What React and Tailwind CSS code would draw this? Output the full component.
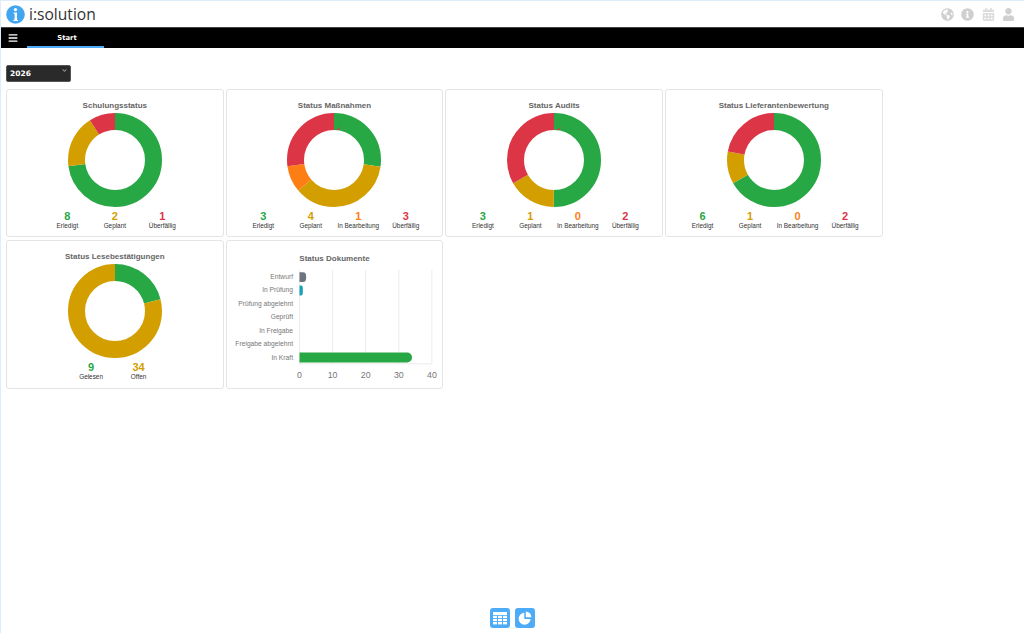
import React from "react";
import { FaGlobeAmericas, FaInfoCircle, FaCalendarAlt, FaUser, FaBars, FaChevronDown } from "react-icons/fa";

const G = "#28a745", A = "#d39e00", O = "#fd7e14", R = "#dc3545";

function Donut({ data }) {
  const total = data.reduce((s, d) => s + d, 0);
  const colors = data.length === 2 ? [G, A] : data.length === 3 ? [G, A, R] : [G, A, O, R];
  const r = 38.5;
  const c = 2 * Math.PI * r;
  let acc = 0;
  return (
    <svg width="96" height="96" viewBox="0 0 96 96" className="block">
      <g transform="rotate(-90 48 48)">
        {data.map((v, i) => {
          const len = (v / total) * c;
          const el = (
            <circle key={i} cx="48" cy="48" r={r} fill="none" stroke={colors[i]} strokeWidth="17"
              strokeDasharray={`${len} ${c - len}`} strokeDashoffset={-acc} />
          );
          acc += len;
          return el;
        })}
      </g>
    </svg>
  );
}

function Stat({ value, label, color }) {
  return (
    <div className="w-[47.5px] flex flex-col items-center">
      <div className="text-[11px] leading-[11px] font-bold" style={{ color }}>{value}</div>
      <div className="text-[6.4px] leading-[8px] text-[#333] whitespace-nowrap">{label}</div>
    </div>
  );
}

function Card({ title, data, stats }) {
  const colors = stats.length === 2 ? [G, A] : stats.length === 3 ? [G, A, R] : [G, A, O, R];
  return (
    <div className="w-[217.67px] h-[148.5px] bg-white border border-[#e4e4e4] rounded-[3px] flex flex-col items-center pt-[11px]">
      <div className="text-[8px] leading-[10px] font-bold text-[#666] whitespace-nowrap">{title}</div>
      <div className="mt-[1px]"><Donut data={data} /></div>
      <div className="flex justify-center mt-[3px]">
        {stats.map((s, i) => <Stat key={s[1]} value={s[0]} label={s[1]} color={colors[i]} />)}
      </div>
    </div>
  );
}

function BarChart() {
  const labels = ["Entwurf", "In Prüfung", "Prüfung abgelehnt", "Geprüft", "In Freigabe", "Freigabe abgelehnt", "In Kraft"];
  const x0 = 72.5, unit = 3.31, top = 29, rowH = 13.4;
  const bars = [[0, 2, "#6c757d"], [1, 1, "#17a2b8"], [6, 34, G]];
  return (
    <svg width="216" height="146" viewBox="0 0 216 146" className="block">
      {[0, 10, 20, 30, 40].map((t) => (
        <g key={t}>
          <line x1={x0 + t * unit} x2={x0 + t * unit} y1={top} y2={top + rowH * 7} stroke="#ececec" strokeWidth="1" />
          <text x={x0 + t * unit} y={top + rowH * 7 + 14} textAnchor="middle" fontSize="8.8" fill="#777">{t}</text>
        </g>
      ))}
      <line x1={x0 - 1} x2={x0 + 40 * unit} y1={top + rowH * 7} y2={top + rowH * 7} stroke="#ececec" />
      {labels.map((l, i) => (
        <text key={l} x={x0 - 6.5} y={top + 13.5 * i + 8.5} textAnchor="end" fontSize="6.7" fill="#777">{l}</text>
      ))}
      {bars.map(([i, v, col]) => {
        const h = 9.8, y = top + rowH * i + 2.2, w = v * unit;
        const rad = Math.min(w * 0.45, 4.9);
        const ry = Math.min(rad + 1, 4.9);
        return (
          <path key={i} fill={col}
            d={`M${x0} ${y}H${x0 + w - rad}A${rad} ${ry} 0 0 1 ${x0 + w} ${y + ry}V${y + h - ry}A${rad} ${ry} 0 0 1 ${x0 + w - rad} ${y + h}H${x0}Z`} />
        );
      })}
    </svg>
  );
}

export default function App() {
  return (
    <div className="h-[633px] flex flex-col bg-white border-l border-t border-[#dcedfb] overflow-hidden" style={{ fontFamily: '"Liberation Sans", Arial, sans-serif' }}>
      <header className="h-[26px] flex items-center justify-between pl-[5px] pr-[9px]">
        <div className="flex items-center gap-[4px]">
          <svg width="19" height="19" viewBox="0 0 19 19" className="block">
            <circle cx="9.5" cy="9.5" r="9.3" fill="#42a5f0" />
            <circle cx="9.5" cy="4.6" r="1.7" fill="#fff" />
            <path d="M7.6 7.6h3.4v7.2h1v1.2H7.4v-1.2h1.2V8.8h-1z" fill="#fff" />
          </svg>
          <span className="text-[15.6px] leading-[20px] text-[#333]" style={{ fontFamily: '"Open Sans", sans-serif' }}>i:solution</span>
        </div>
        <div className="flex items-center gap-[7.5px] text-[#d0d0d0] text-[13px]">
          <FaGlobeAmericas />
          <FaInfoCircle />
          <FaCalendarAlt className="text-[#dcdcdc]" />
          <FaUser />
        </div>
      </header>
      <nav className="h-[21px] bg-black flex items-stretch border-t border-[#444]">
        <div className="w-[26px] flex items-center justify-center text-white text-[10px] pr-[3px]"><FaBars /></div>
        <div className="w-[77px] flex items-center justify-center text-white text-[6.8px] font-bold border-b-2 border-[#4dabf7] pt-[2px] pl-[3px]" style={{ fontFamily: '"DejaVu Sans", sans-serif' }}>Start</div>
      </nav>
      <main className="flex-1 pl-[5px] pt-[17px] flex flex-col">
        <div className="w-[65px] h-[17px] bg-[#2a2a2a] rounded-[2px] border border-[#555] relative flex items-center pl-[3px]">
          <span className="text-white text-[7.5px] font-bold" style={{ fontFamily: '"DejaVu Sans", sans-serif' }}>2026</span>
          <FaChevronDown className="absolute right-[3px] top-[2px] text-[#aaa] text-[5px]" />
        </div>
        <div className="mt-[6.5px] w-[880px] flex flex-wrap gap-x-[2px] gap-y-[3px]">
          <Card title="Schulungsstatus" data={[8, 2, 1]} stats={[[8, "Erledigt"], [2, "Geplant"], [1, "Überfällig"]]} />
          <Card title="Status Maßnahmen" data={[3, 4, 1, 3]} stats={[[3, "Erledigt"], [4, "Geplant"], [1, "In Bearbeitung"], [3, "Überfällig"]]} />
          <Card title="Status Audits" data={[3, 1, 0, 2]} stats={[[3, "Erledigt"], [1, "Geplant"], [0, "In Bearbeitung"], [2, "Überfällig"]]} />
          <Card title="Status Lieferantenbewertung" data={[6, 1, 0, 2]} stats={[[6, "Erledigt"], [1, "Geplant"], [0, "In Bearbeitung"], [2, "Überfällig"]]} />
          <Card title="Status Lesebestätigungen" data={[9, 34]} stats={[[9, "Gelesen"], [34, "Offen"]]} />
          <div className="w-[217.67px] h-[148.5px] bg-white border border-[#e4e4e4] rounded-[3px] flex flex-col items-center pt-[13px] relative">
            <div className="absolute left-0 top-0"><BarChart /></div>
            <div className="relative text-[8px] leading-[10px] font-bold text-[#666] whitespace-nowrap">Status Dokumente</div>
          </div>
        </div>
        <div className="mt-auto mb-[5px] flex justify-center gap-[5px] pr-[6px]">
          <div className="w-[20px] h-[20px] bg-[#4dabf7] rounded-[3px] flex items-center justify-center">
            <svg width="14" height="13" viewBox="0 0 14 13" className="block" fill="#fff">
              <rect x="0" y="0" width="14" height="3" />
              <rect x="0" y="3.8" width="4" height="2.2" /><rect x="5" y="3.8" width="4" height="2.2" /><rect x="10" y="3.8" width="4" height="2.2" />
              <rect x="0" y="6.9" width="4" height="2.2" /><rect x="5" y="6.9" width="4" height="2.2" /><rect x="10" y="6.9" width="4" height="2.2" />
              <rect x="0" y="10" width="4" height="2.4" /><rect x="5" y="10" width="4" height="2.4" /><rect x="10" y="10" width="4" height="2.4" />
            </svg>
          </div>
          <div className="w-[20px] h-[20px] bg-[#4dabf7] rounded-[3px] flex items-center justify-center">
            <svg width="14" height="14" viewBox="0 0 14 14" className="block" fill="#fff">
              <path d="M6.3 1.8A6 6 0 1 0 12.6 8H6.3z" />
              <path d="M7.8 0.6A5.8 5.8 0 0 1 13.4 6.3H7.8z" />
            </svg>
          </div>
        </div>
      </main>
    </div>
  );
}
